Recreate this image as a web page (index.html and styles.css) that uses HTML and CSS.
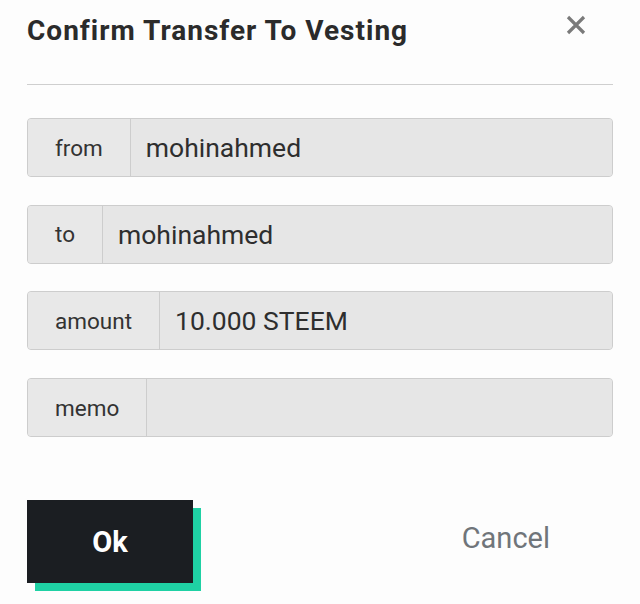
FILE: index.html
```html
<!DOCTYPE html>
<html>
<head>
<meta charset="utf-8">
<link rel="stylesheet" href="styles.css">
</head>
<body>
<div class="dialog">
  <div class="header">
    <h1 class="title">Confirm Transfer To Vesting</h1>
    <button class="close" aria-label="Close">
      <svg width="20" height="20" viewBox="0 0 20 20"><path d="M2 2 L18 18 M18 2 L2 18" stroke="#7a7a7a" stroke-width="3.2" stroke-linecap="butt"/></svg>
    </button>
  </div>
  <hr class="divider">
  <div class="fields">
    <div class="group"><span class="label">from</span><span class="value">mohinahmed</span></div>
    <div class="group"><span class="label">to</span><span class="value">mohinahmed</span></div>
    <div class="group"><span class="label">amount</span><span class="value">10.000 STEEM</span></div>
    <div class="group"><span class="label">memo</span><span class="value"></span></div>
  </div>
  <div class="actions">
    <button class="ok">Ok</button>
    <button class="cancel">Cancel</button>
  </div>
</div>
</body>
</html>
```
FILE: styles.css
```css
html, body {
  margin: 0;
  padding: 0;
  background: #fdfdfd;
}
body {
  font-family: Roboto, "Liberation Sans", sans-serif;
  color: #333;
  min-height: 604px;
}
.dialog {
  padding: 0 27px 30px 27px;
}
.header {
  display: flex;
  justify-content: space-between;
  align-items: flex-start;
  height: 84px;
}
.title {
  margin: 14px 0 0 0;
  font-size: 28px;
  font-weight: 700;
  color: #2b2b2b;
  letter-spacing: 1px;
}
.close {
  margin: 15px 27px 0 0;
  padding: 0;
  border: 0;
  background: none;
  width: 20px;
  height: 20px;
}
.close svg { display: block; }
.divider {
  margin: 0;
  border: 0;
  border-top: 1px solid #cfcfcf;
  height: 0;
}
.fields {
  display: flex;
  flex-direction: column;
  gap: 27.7px;
  margin-top: 33px;
}
.group {
  display: flex;
  height: 59px;
  border: 1px solid #cdcdcd;
  border-radius: 4px;
  background: #e6e6e6;
  box-sizing: border-box;
  overflow: hidden;
}
.label {
  display: flex;
  align-items: center;
  padding: 0 27px;
  font-size: 22.5px;
  color: #333;
  border-right: 1px solid #cdcdcd;
  background: #e8e8e8;
}
.value {
  flex: 1;
  display: flex;
  align-items: center;
  padding: 0 15px;
  font-size: 26.5px;
  color: #2e2e2e;
  background: #e6e6e6;
}
.actions {
  display: flex;
  align-items: center;
  margin-top: 63px;
}
.ok {
  width: 166px;
  height: 83px;
  border: 0;
  background: #1b1e22;
  color: #fff;
  font-family: Roboto, "Liberation Sans", sans-serif;
  font-size: 29px;
  font-weight: 700;
  box-shadow: 8px 8px 0 #1fd1a4;
  padding: 0;
}
.cancel {
  margin: 0 63px 8px auto;
  border: 0;
  background: none;
  color: #70757a;
  font-family: Roboto, "Liberation Sans", sans-serif;
  font-size: 29px;
  padding: 0;
}
```
